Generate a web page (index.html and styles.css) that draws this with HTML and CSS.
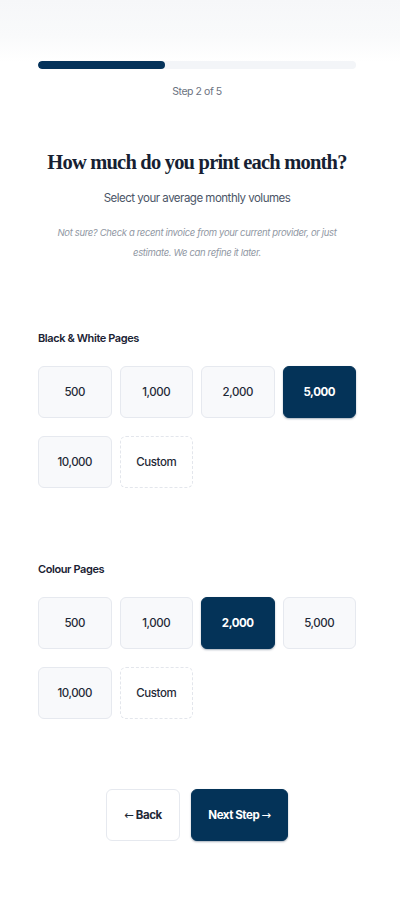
FILE: index.html
```html
<!DOCTYPE html>
<html lang="en">
<head>
<meta charset="utf-8">
<title>Print volumes</title>
<link rel="stylesheet" href="styles.css">
</head>
<body>
<div class="page">
  <div class="progress">
    <div class="track"><div class="fill" style="width:40%"></div></div>
    <div class="step">Step 2 of 5</div>
  </div>

  <div class="intro">
    <h1 class="title">How much do you print each month?</h1>
    <p class="subtitle">Select your average monthly volumes</p>
    <p class="note">Not sure? Check a recent invoice from your current provider, or just estimate. We can refine it later.</p>
  </div>

  <section class="group">
    <h2 class="label">Black &amp; White Pages</h2>
    <div class="options">
      <button class="opt">500</button>
      <button class="opt">1,000</button>
      <button class="opt">2,000</button>
      <button class="opt selected">5,000</button>
      <button class="opt">10,000</button>
      <button class="opt custom">Custom</button>
    </div>
  </section>

  <section class="group second">
    <h2 class="label">Colour Pages</h2>
    <div class="options">
      <button class="opt">500</button>
      <button class="opt">1,000</button>
      <button class="opt selected">2,000</button>
      <button class="opt">5,000</button>
      <button class="opt">10,000</button>
      <button class="opt custom">Custom</button>
    </div>
  </section>

  <div class="nav">
    <button class="btn back"><span class="arrow">←</span> Back</button>
    <button class="btn next">Next Step <span class="arrow">→</span></button>
  </div>
</div>
</body>
</html>
```

FILE: styles.css
```css
* { box-sizing: border-box; }
html, body { margin: 0; padding: 0; }
body {
  background: linear-gradient(to bottom, #f6f7f9 0px, #f9fafb 36px, #ffffff 62px, #ffffff 100%);
  font-family: "Inter", "Open Sans", sans-serif;
  color: #1f2937;
  width: 400px;
  min-height: 900px;
}
.page {
  padding: 61px 44px 0 38px;
}
.progress { display: flex; flex-direction: column; align-items: stretch; }
.track {
  height: 8px;
  background: #f3f5f8;
  border-radius: 4px;
  overflow: hidden;
}
.fill { height: 100%; background: #05335b; border-radius: 4px; }
.step {
  margin-top: 15px;
  text-align: center;
  font-size: 10.5px;
  letter-spacing: -0.45px;
  color: #6b7280;
  line-height: 16px;
}
.intro { text-align: center; margin-top: 47px; }
.title {
  margin: 0;
  font-family: "Liberation Serif", "DejaVu Serif", serif;
  font-weight: 700;
  font-size: 20.5px;
  letter-spacing: -0.8px;
  line-height: 30px;
  color: #171f33;
  white-space: nowrap;
}
.subtitle {
  margin: 12px 0 0;
  font-size: 11.5px;
  letter-spacing: -0.5px;
  color: #4b5567;
  line-height: 18px;
}
.note {
  margin: 16px 0 0;
  font-size: 9.5px;
  font-style: italic;
  letter-spacing: -0.35px;
  color: #9097a3;
  line-height: 20px;
  padding: 0 14px;
}
.group { margin-top: 67px; }
.group.second { margin-top: 73px; }
.label {
  margin: 0;
  font-size: 11px;
  font-weight: 600;
  letter-spacing: -0.4px;
  color: #1a2233;
  line-height: 16px;
}
.options {
  margin-top: 20px;
  display: grid;
  grid-template-columns: repeat(4, 1fr);
  column-gap: 8px;
  row-gap: 18px;
}
.opt {
  height: 52px;
  border: 1px solid #e6e9ef;
  background: #f8f9fb;
  border-radius: 6px;
  font-family: inherit;
  font-size: 11.5px;
  font-weight: 500;
  letter-spacing: -0.45px;
  color: #1f2937;
  padding: 0;
}
.opt.selected {
  background: #043358;
  border-color: #043358;
  color: #ffffff;
  font-weight: 700;
  box-shadow: 0 1px 2px rgba(0, 30, 60, 0.35);
}
.opt.custom {
  background: #ffffff;
  border: 1px dashed #e3e6ec;
}
.nav {
  margin-top: 70px;
  display: flex;
  justify-content: center;
  gap: 11px;
}
.btn {
  height: 52px;
  border-radius: 6px;
  font-family: inherit;
  font-size: 11.5px;
  font-weight: 700;
  letter-spacing: -0.45px;
  padding: 0;
}
.arrow {
  font-family: "DejaVu Sans", sans-serif;
  font-weight: 400;
}
.back {
  width: 74px;
  background: #ffffff;
  border: 1px solid #e6e9ef;
  color: #1f2937;
}
.next {
  width: 97px;
  background: #043358;
  border: 1px solid #043358;
  color: #ffffff;
  box-shadow: 0 1px 2px rgba(0, 30, 60, 0.35);
}
```
